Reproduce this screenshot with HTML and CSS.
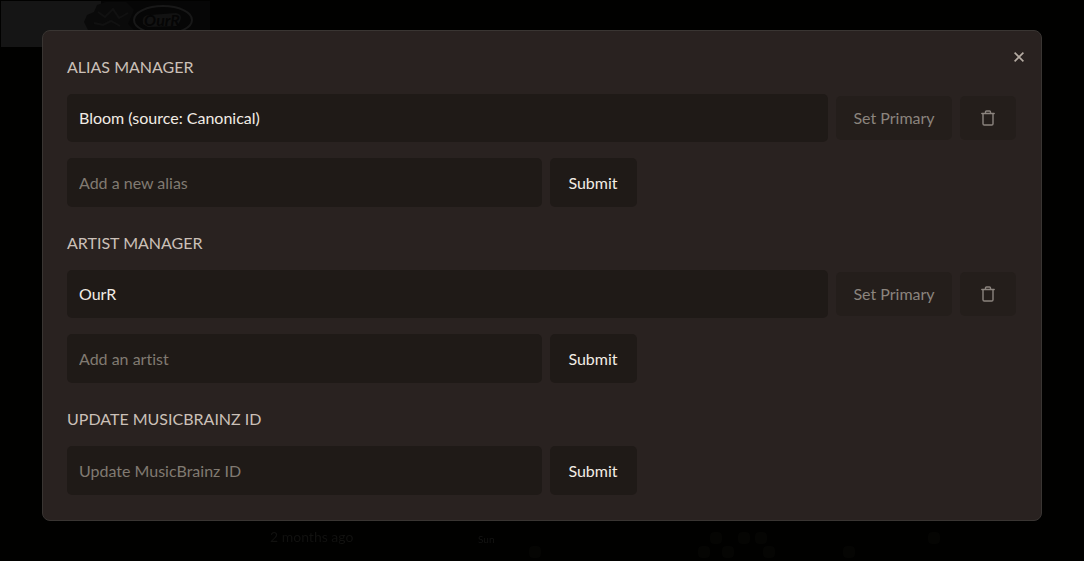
FILE: index.html
```html
<!DOCTYPE html>
<html lang="en">
<head>
<meta charset="utf-8">
<title>Alias Manager</title>
<link rel="stylesheet" href="styles.css">
</head>
<body>
<div class="page" aria-hidden="true">
  <svg class="cover" width="210" height="47" viewBox="0 0 210 47">
    <rect x="1" y="1" width="100" height="46" fill="#151515"/>
    <rect x="101" y="1" width="109" height="46" fill="#060606"/>
    <path d="M84 22L87 15 94 12 97 5 106 2 126 2 134 10 128 24 134 30H88Z" fill="#0a0a0a"/>
    <path d="M98 12l7 5 8-8 6 9 9-5M94 23l9 2 8-4 9 5" fill="none" stroke="#111" stroke-width="2"/>
    <ellipse cx="163" cy="20" rx="29" ry="14" fill="#060606" stroke="#181818" stroke-width="2"/>
    <path d="M143 24q-2-9 7-9l26-2q7 1 4 8l-3 5-29 1z" fill="#121212"/>
    <text class="cover-name" x="162" y="26" text-anchor="middle">OurR</text>
  </svg>
  <div class="activity">
    <span class="ago">2 months ago</span>
    <span class="day">Sun</span>
    <svg class="heat" width="420" height="32" viewBox="0 0 420 32" fill="#050503">
      <rect x="9" y="17" width="12" height="12" rx="4"/>
      <rect x="178" y="17" width="12" height="12" rx="4"/>
      <rect x="202" y="17" width="12" height="12" rx="4"/>
      <rect x="190" y="3" width="12" height="12" rx="4"/>
      <rect x="218" y="3" width="12" height="12" rx="4"/>
      <rect x="235" y="3" width="12" height="12" rx="4"/>
      <rect x="243" y="17" width="12" height="12" rx="4"/>
      <rect x="323" y="17" width="12" height="12" rx="4"/>
      <rect x="408" y="3" width="12" height="12" rx="4"/>
    </svg>
  </div>
</div>
<div class="overlay">
  <main class="modal" role="dialog" aria-modal="true" aria-label="Manage album">
    <button class="close" aria-label="Close">
      <svg width="10" height="10" viewBox="0 0 10 10" fill="none" stroke="currentColor" stroke-width="1.6"><path d="M.6 .6l8.8 8.8M9.4 .6L.6 9.4"/></svg>
    </button>
    <section class="group">
      <h2>ALIAS MANAGER</h2>
      <div class="row">
        <div class="value">Bloom (source: Canonical)</div>
        <button class="btn primary" disabled>Set Primary</button>
        <button class="btn trash" disabled aria-label="Delete alias">
          <svg width="14" height="16" viewBox="0 0 14 16" fill="none" stroke="currentColor" stroke-width="1.4" stroke-linecap="round" stroke-linejoin="round"><path d="M.8 3.5h12.4M4.5 3.3V2q0-1 1-1h3q1 0 1 1v1.3M2 3.7V13.7q0 1.3 1.3 1.3h7.4q1.3 0 1.3-1.3V3.7"/></svg>
        </button>
      </div>
      <form class="entry">
        <input type="text" placeholder="Add a new alias" aria-label="Add a new alias">
        <button class="btn submit" type="button">Submit</button>
      </form>
    </section>
    <section class="group">
      <h2>ARTIST MANAGER</h2>
      <div class="row">
        <div class="value">OurR</div>
        <button class="btn primary" disabled>Set Primary</button>
        <button class="btn trash" disabled aria-label="Delete artist">
          <svg width="14" height="16" viewBox="0 0 14 16" fill="none" stroke="currentColor" stroke-width="1.4" stroke-linecap="round" stroke-linejoin="round"><path d="M.8 3.5h12.4M4.5 3.3V2q0-1 1-1h3q1 0 1 1v1.3M2 3.7V13.7q0 1.3 1.3 1.3h7.4q1.3 0 1.3-1.3V3.7"/></svg>
        </button>
      </div>
      <form class="entry">
        <input type="text" placeholder="Add an artist" aria-label="Add an artist">
        <button class="btn submit" type="button">Submit</button>
      </form>
    </section>
    <section class="group">
      <h2>UPDATE MUSICBRAINZ ID</h2>
      <form class="entry">
        <input type="text" placeholder="Update MusicBrainz ID" aria-label="Update MusicBrainz ID">
        <button class="btn submit" type="button">Submit</button>
      </form>
    </section>
  </main>
</div>
</body>
</html>
```

FILE: styles.css
```css
* { box-sizing: border-box; }

body {
  margin: 0;
  background: #010100;
  color: #f2ece5;
  font: 16px/24px Lato, "Open Sans", sans-serif;
  font-variant-ligatures: none;
}

.page {
  position: fixed;
  inset: 0;
  display: flex;
  flex-direction: column;
  justify-content: space-between;
}

.cover-name {
  font: italic bold 16px Lato, sans-serif;
  fill: #050505;
}

.activity {
  display: flex;
  align-items: flex-start;
  padding-left: 270px;
}

.ago {
  width: 208px;
  font-size: 14px;
  line-height: 16px;
  color: #11110f;
}

.day {
  width: 42px;
  font-size: 10px;
  line-height: 20px;
  color: #141412;
}

.overlay {
  position: relative;
  min-height: 100vh;
  padding: 30px 42px 40px;
}

.modal {
  position: relative;
  display: flex;
  flex-direction: column;
  gap: 24px;
  max-width: 1000px;
  margin: 0 auto;
  padding: 24px 25px 25px 24px;
  background: #292220;
  border: 1px solid #393532;
  border-radius: 8px;
}

.close {
  position: absolute;
  top: 16px;
  right: 12px;
  display: grid;
  place-items: center;
  width: 20px;
  height: 20px;
  padding: 0;
  border: 0;
  background: none;
  color: #b5aca3;
}

.group {
  display: flex;
  flex-direction: column;
}

h2 {
  margin: 0 0 15px;
  font-size: 16px;
  line-height: 24px;
  font-weight: 400;
  color: #cbc0b8;
}

.row {
  display: flex;
  align-items: center;
  gap: 8px;
  margin-bottom: 16px;
}

.value {
  flex: 1;
  padding: 12px;
  border-radius: 5px;
  background: #1f1a17;
}

.btn {
  display: flex;
  align-items: center;
  justify-content: center;
  padding: 0;
  border: 0;
  border-radius: 5px;
  background: #1f1a17;
  color: #f2ece5;
  font: inherit;
}

.btn:disabled {
  height: 44px;
  background: #241e1b;
  color: #8b847e;
}

.primary { width: 116px; }

.trash { width: 56px; }

.entry {
  display: flex;
  gap: 8px;
  height: 49px;
}

input {
  width: 50%;
  padding: 0 12px;
  border: 0;
  border-radius: 5px;
  background: #1f1a17;
  color: #f2ece5;
  font: inherit;
}

input::placeholder {
  color: #817a72;
  opacity: 1;
}

.submit { width: 87px; }
```
